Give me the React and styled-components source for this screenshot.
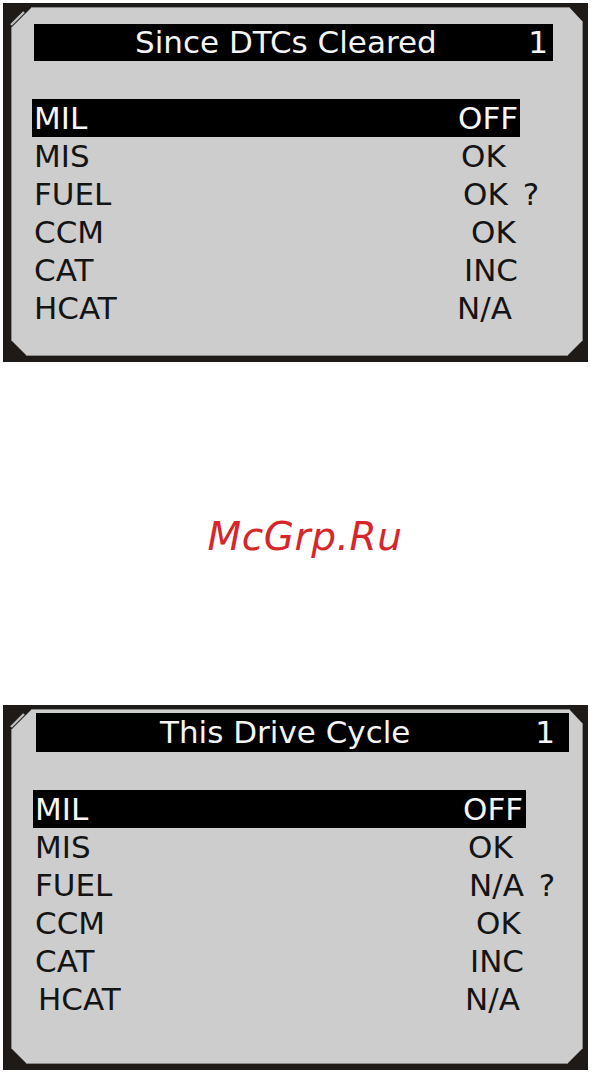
import React from 'react';
import styled, { createGlobalStyle } from 'styled-components';

const GlobalStyle = createGlobalStyle`
  html, body {
    margin: 0;
    padding: 0;
    background: #ffffff;
  }
  body {
    font-family: "DejaVu Sans", Verdana, sans-serif;
  }
`;

const Page = styled.div`
  display: flex;
  flex-direction: column;
  align-items: flex-start;
  width: 597px;
  padding: 3px 0 0 3px;
  box-sizing: border-box;
`;

const Bezel = styled.div`
  position: relative;
  width: 585px;
  box-sizing: border-box;
  padding: 4px 5px 6px 8px;
  background: #1d1a18;
`;

const Glint = styled.svg`
  position: absolute;
  left: 0;
  top: 0;
  width: 30px;
  height: 30px;
`;

const Screen = styled.div`
  display: flex;
  flex-direction: column;
  height: ${({ $height }) => $height}px;
  background: #cdcdcd;
  box-shadow: inset 0 0 0 1px #8a8a8a;
  clip-path: polygon(
    21px 0,
    calc(100% - 14px) 0,
    100% 15px,
    100% calc(100% - 16px),
    calc(100% - 16px) 100%,
    16px 100%,
    0 calc(100% - 16px),
    0 21px
  );
`;

const Header = styled.div`
  display: flex;
  align-items: center;
  box-sizing: border-box;
  margin: ${({ $top }) => $top}px 0 0 ${({ $left }) => $left}px;
  width: ${({ $width }) => $width}px;
  height: ${({ $height }) => $height}px;
  padding: 0 ${({ $right }) => $right}px 0 ${({ $titleLeft }) => $titleLeft}px;
  background: #000;
  color: #f4f4f4;
  font-size: 31px;
  line-height: 1;
`;

const Title = styled.span`
  flex: 1;
`;

const PageNo = styled.span``;

const Rows = styled.div`
  display: flex;
  flex-direction: column;
  margin: ${({ $top }) => $top}px 0 0 ${({ $left }) => $left}px;
  width: ${({ $width }) => $width}px;
`;

const Row = styled.div`
  display: flex;
  align-items: center;
  height: 38px;
  font-size: 31px;
  line-height: 38px;
  color: ${({ $active }) => ($active ? '#f6f6f6' : '#141414')};
  background: ${({ $active }) => ($active ? '#000' : 'transparent')};
`;

const Label = styled.span`
  width: ${({ $valueAt }) => $valueAt}px;
  flex-shrink: 0;
  padding-left: ${({ $indent }) => $indent}px;
  box-sizing: border-box;
`;

const Value = styled.span`
  white-space: pre;
`;

const Query = styled.span`
  margin-left: 15px;
`;

const Watermark = styled.div`
  align-self: center;
  margin: 155px 0 148px 10px;
  font-size: 39px;
  line-height: 40px;
  font-style: italic;
  color: #d7262a;
  letter-spacing: 0.6px;
`;

const screens = [
  {
    title: 'Since DTCs Cleared',
    height: 349,
    header: { top: 17, left: 23, width: 519, height: 37, titleLeft: 101, right: 5 },
    rows: { top: 38, left: 21, width: 488 },
    items: [
      ['MIL', 'OFF', 426],
      ['MIS', 'OK', 429],
      ['FUEL', 'OK', 431, true],
      ['CCM', 'OK', 439],
      ['CAT', 'INC', 432],
      ['HCAT', 'N/A', 425]
    ]
  },
  {
    title: 'This Drive Cycle',
    height: 355,
    header: { top: 4, left: 25, width: 533, height: 39, titleLeft: 124, right: 14 },
    rows: { top: 38, left: 22, width: 493 },
    items: [
      ['MIL', 'OFF', 430],
      ['MIS', 'OK', 435],
      ['FUEL', 'N/A', 436, true],
      ['CCM', 'OK', 443],
      ['CAT', 'INC', 437],
      ['HCAT', 'N/A', 432]
    ]
  }
];

const Device = ({ data, second }) => (
  <Bezel>
    <Screen $height={data.height}>
      <Header
        $top={data.header.top}
        $left={data.header.left}
        $width={data.header.width}
        $height={data.header.height}
        $titleLeft={data.header.titleLeft}
        $right={data.header.right}
      >
        <Title>{data.title}</Title>
        <PageNo>1</PageNo>
      </Header>
      <Rows $top={data.rows.top} $left={data.rows.left} $width={data.rows.width}>
        {data.items.map(([label, value, at, unsure], i) => (
          <Row key={label} $active={i === 0}>
            <Label $valueAt={at} $indent={label === 'HCAT' && second ? 5 : 2}>
              {label}
            </Label>
            <Value>
              {value}
              {unsure && <Query>?</Query>}
            </Value>
          </Row>
        ))}
      </Rows>
    </Screen>
    <Glint viewBox="0 0 30 30">
      <line x1="8" y1="22" x2="21" y2="9" stroke="#bdbdbd" strokeWidth="2.4" />
    </Glint>
  </Bezel>
);

const App = () => (
  <>
    <GlobalStyle />
    <Page>
      <Device data={screens[0]} />
      <Watermark>McGrp.Ru</Watermark>
      <Device data={screens[1]} second />
    </Page>
  </>
);

export default App;
